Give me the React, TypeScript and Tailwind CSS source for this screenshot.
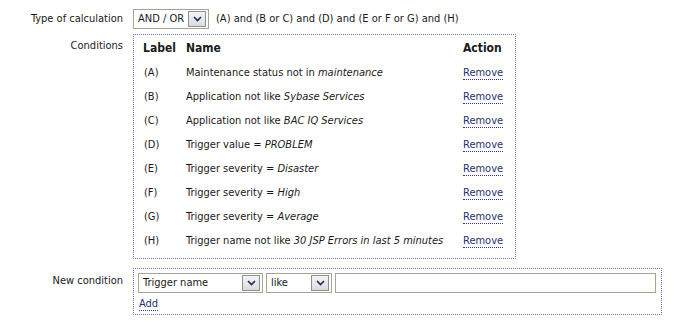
import React from "react";

function Chevron() {
  return (
    <span className="flex h-[16px] w-[18px] items-center justify-center border border-[#8e8f8f] bg-gradient-to-b from-[#f4f4f4] to-[#dcdcdc]">
      <svg width="9" height="6" viewBox="0 0 9 6">
        <path d="M1 1 L4.5 4.5 L8 1" fill="none" stroke="#1c2a5a" strokeWidth="1.6" />
      </svg>
    </span>
  );
}

function Select({ text, w }: { text: string; w: string }) {
  return (
    <div className={`flex h-[20px] ${w} items-center justify-between border border-[#a6a594] bg-white pl-[4px] pr-[2px]`}>
      <span>{text}</span>
      <Chevron />
    </div>
  );
}

function Remove() {
  return (
    <span className="border-b border-dotted border-[#33309a] leading-[12px] text-[#27306e]">Remove</span>
  );
}

const rows: [string, string, string][] = [
  ["(A)", "Maintenance status not in ", "maintenance"],
  ["(B)", "Application not like ", "Sybase Services"],
  ["(C)", "Application not like ", "BAC IQ Services"],
  ["(D)", "Trigger value = ", "PROBLEM"],
  ["(E)", "Trigger severity = ", "Disaster"],
  ["(F)", "Trigger severity = ", "High"],
  ["(G)", "Trigger severity = ", "Average"],
  ["(H)", "Trigger name not like ", "30 JSP Errors in last 5 minutes"],
];

export default function App() {
  return (
    <div className="h-[331px] w-[675px] bg-white text-[11px] text-[#1a1a1a]" style={{ fontFamily: '"DejaVu Sans Condensed", "DejaVu Sans", sans-serif' }}>
      <div className="flex flex-col pt-[9px]">
        <div className="flex items-center">
          <div className="w-[123px] text-right">Type of calculation</div>
          <div className="ml-[10px] flex items-center">
            <Select text="AND / OR" w="w-[76px]" />
            <span className="ml-[7px]">(A) and (B or C) and (D) and (E or F or G) and (H)</span>
          </div>
        </div>
        <div className="mt-[5px] flex">
          <div className="w-[123px] pt-[4px] text-right">Conditions</div>
          <div className="ml-[10px] w-[383px] border border-dotted border-[#6a7bbf] pb-[5px] pl-[9px] pr-[9px]">
            <div className="flex h-[26px] items-center text-[12px] font-bold">
              <div className="w-[43px]">Label</div>
              <div className="flex-1">Name</div>
              <div className="w-[43px]">Action</div>
            </div>
            {rows.map(([l, n, i]) => (
              <div key={l} className="flex h-[24px] items-center">
                <div className="w-[43px] pl-[1px]">{l}</div>
                <div className="flex-1 whitespace-nowrap">
                  {n}
                  <i>{i}</i>
                </div>
                <div className="w-[43px]">
                  <Remove />
                </div>
              </div>
            ))}
          </div>
        </div>
        <div className="mt-[9px] flex">
          <div className="w-[123px] pt-[5px] text-right">New condition</div>
          <div className="ml-[10px] w-[529px] border border-dotted border-[#6a7bbf] pb-[4px] pl-[4px] pr-[5px] pt-[4px]">
            <div className="flex items-center">
              <Select text="Trigger name" w="w-[125px]" />
              <div className="ml-[3px]">
                <Select text="like" w="w-[66px]" />
              </div>
              <div className="ml-[3px] h-[20px] flex-1 border border-[#a6a594] bg-white" />
            </div>
            <div className="mt-[4px] pl-[1px] leading-[13px]">
              <span className="border-b border-dotted border-[#33309a] leading-[12px] text-[#27306e]">Add</span>
            </div>
          </div>
        </div>
      </div>
    </div>
  );
}
